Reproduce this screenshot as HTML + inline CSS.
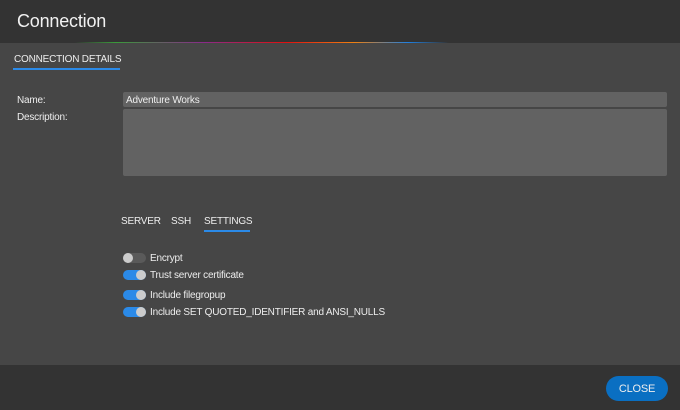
<!DOCTYPE html><html><head><style>
body{margin:0;width:680px;height:410px;background:#464646;font-family:"Liberation Sans",sans-serif;color:#eee;position:relative;overflow:hidden;font-size:10px;letter-spacing:-0.2px}
.a{position:absolute}
.hdr{left:0;top:0;width:680px;height:42px;background:#333}
.line{left:0;top:42px;width:680px;height:1px;background:linear-gradient(90deg,#333 11%,#3a9a3a 17%,#8a2a8a 30%,#e01010 42%,#f08010 52%,#2080e0 60%,#333 66%)}
.ftr{left:0;top:365px;width:680px;height:45px;background:#333}
.tog{position:absolute;left:123px;width:23px;height:10px;border-radius:5px;background:#2b8ae8}
.tog i{position:absolute;top:0;width:10px;height:10px;border-radius:5px;background:#ccc;right:0}
.off{background:#5a5a5a}.off i{left:0;right:auto}
.lbl{position:absolute;left:150px;font-size:10px}
</style></head><body>
<div class="a hdr"></div><div class="a line"></div>
<div class="a" style="left:17px;top:11px;font-size:18px;color:#f2f2f2">Connection</div>
<div class="a" style="left:14px;top:54px;font-size:10px">CONNECTION DETAILS</div>
<div class="a" style="left:13px;top:68px;width:107px;height:2px;background:#2b8ae8"></div>
<div class="a" style="left:17px;top:95px">Name:</div>
<div class="a" style="left:17px;top:112px">Description:</div>
<div class="a" style="left:123px;top:92px;width:544px;height:15px;background:#626262;border-radius:2px"></div>
<div class="a" style="left:126px;top:95px">Adventure Works</div>
<div class="a" style="left:123px;top:109px;width:544px;height:67px;background:#626262;border-radius:2px"></div>
<div class="a" style="left:121px;top:216px">SERVER</div>
<div class="a" style="left:171px;top:216px">SSH</div>
<div class="a" style="left:204px;top:216px">SETTINGS</div>
<div class="a" style="left:204px;top:230px;width:46px;height:2px;background:#2b8ae8"></div>
<div class="tog off" style="top:253px"><i></i></div><div class="lbl" style="top:253px">Encrypt</div>
<div class="tog" style="top:270px"><i></i></div><div class="lbl" style="top:270px">Trust server certificate</div>
<div class="tog" style="top:290px"><i></i></div><div class="lbl" style="top:290px">Include filegropup</div>
<div class="tog" style="top:307px"><i></i></div><div class="lbl" style="top:307px">Include SET QUOTED_IDENTIFIER and ANSI_NULLS</div>
<div class="a ftr"></div>
<div class="a" style="left:606px;top:376px;width:62px;height:25px;border-radius:13px;background:#0a6fc2;text-align:center;line-height:26px;font-size:11px">CLOSE</div>
</body></html>
